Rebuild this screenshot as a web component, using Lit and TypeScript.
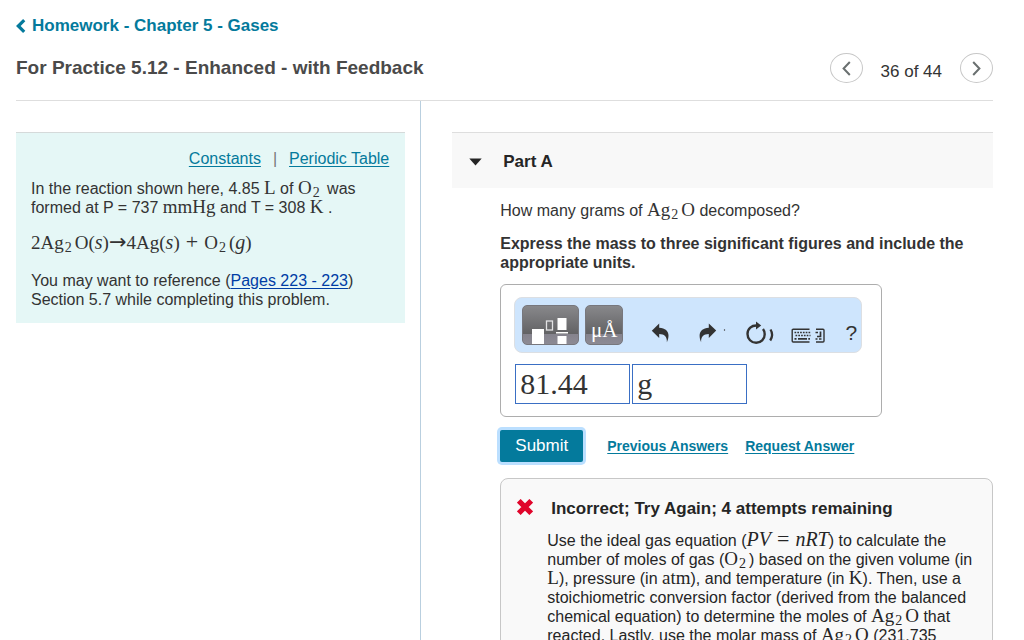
import { LitElement, html, css } from "lit";
import { customElement, state } from "lit/decorators.js";

const o2 = html`<span class="math">O<sub>2</sub></span>`;
const ag2o = html`<span class="math">Ag<sub>2</sub>O</span>`;

@customElement("answer-editor")
export class AnswerEditor extends LitElement {
  @state() private amount = "81.44";
  @state() private unit = "g";

  static styles = css`
    :host {
      display: block;
      width: fit-content;
      max-width: 100%;
      box-sizing: border-box;
      border: 1px solid #adadad;
      border-radius: 6px;
      padding: 12px 19px 12px 13px;
      background: #fff;
    }
    .toolbar {
      display: flex;
      align-items: flex-start;
      gap: 6px;
      padding: 7px 4px 7px 7px;
      border: 1px solid #dcdfe3;
      border-radius: 8px;
      background: #cee5fd;
    }
    button {
      display: block;
      margin: 0;
      padding: 0;
      border: 0;
      background: none;
      color: #333;
      cursor: pointer;
    }
    svg {
      display: block;
    }
    .palette {
      box-sizing: border-box;
      height: 40px;
      border: 1px solid #77777d;
      border-radius: 5px;
      background: linear-gradient(#88888b 0, #626264 28px, #85838d 28px, #8c8a94 100%);
      color: #fff;
      overflow: hidden;
    }
    .templates {
      width: 57px;
    }
    .units {
      width: 38px;
      padding-top: 10px;
      font: 21px/28px "Liberation Serif", serif;
    }
    .tools {
      display: flex;
      gap: 15px;
      padding: 16px 0 0 22px;
    }
    .help {
      width: 12px;
      font: 21px/24px "Liberation Sans", sans-serif;
    }
    .fields {
      display: flex;
      gap: 2px;
      padding: 11px 0 0 1px;
    }
    input {
      box-sizing: border-box;
      width: 115px;
      height: 40px;
      padding: 0 4px;
      border: 1px solid #3a6fc4;
      border-radius: 0;
      background: #fff;
      color: #333;
      font: 30px/38px "Liberation Serif", serif;
      outline: 0;
    }
  `;

  render() {
    return html`
      <div class="toolbar" role="toolbar" aria-label="Math tools">
        <button class="palette templates" aria-label="Templates">
          <svg width="55" height="38" viewBox="0 0 55 38">
            <rect x="9" y="23" width="12" height="15" fill="#fff" />
            <rect x="23.500" y="15" width="6" height="9" fill="none" stroke="#e3e3e5" stroke-width="1.300" />
            <rect x="34.500" y="12" width="9" height="12" fill="#fff" />
            <rect x="33" y="26" width="12" height="1.500" fill="#fff" />
            <rect x="34.500" y="30" width="9" height="8" fill="#fff" />
          </svg>
        </button>
        <button class="palette units" aria-label="Units">μÅ</button>
        <div class="tools">
          <button aria-label="Undo">
            <svg width="33" height="24" viewBox="0 0 33 24" fill="currentColor">
              <path d="M.8 9.700 8.200 2.500v4.300c6 .2 9.300 3.500 9.300 7.800 0 2.300-.6 4.500-1.600 6.600.2-5.800-2.600-8-7.700-8.100v3.900z" />
            </svg>
          </button>
          <button aria-label="Redo">
            <svg width="32" height="24" viewBox="0 0 32 24" fill="currentColor">
              <path d="M17.200 9.500 9.800 2.500v4.300C4 7 .6 10.300.6 14.500c0 2.300.5 4.600 1.500 6.700-.2-5.800 2.600-8 7.700-8.100V17z" />
              <circle cx="25.500" cy="9" r=".7" />
            </svg>
          </button>
          <button aria-label="Reset">
            <svg width="30" height="24" viewBox="0 0 30 24">
              <path d="M11.500 4.600C5.500 4 1.500 8 1.500 12.900c0 5 3.800 8.900 8.700 8.900 4.700 0 8.500-3.700 8.500-8.500 0-2-.6-3.800-1.700-5.200" fill="none" stroke="currentColor" stroke-width="2.400" />
              <path d="M10 .5 15.200 4.600 10 8.600z" fill="currentColor" />
              <path d="M24.500 8.500c2 3.200 2 7.500-.3 11" fill="none" stroke="currentColor" stroke-width="2.300" />
            </svg>
          </button>
          <button aria-label="Keyboard shortcuts">
            <svg width="39" height="24" viewBox="0 0 39 24" fill="none" stroke="currentColor">
              <path d="M18.500 8.300H2.200Q1.200 8.300 1.200 9.300V20Q1.200 21 2.200 21H18.500" stroke-width="1.400" />
              <path d="M3.500 11.500H19.500M4.500 14.500H19.500" stroke-width="1.700" stroke-dasharray="1.700 1.100" />
              <path d="M3.500 17.900h2M7 17.900h9M17.300 17.900h1.700" stroke-width="1.600" />
              <path d="M25 8.300h7Q33 8.300 33 9.300V20Q33 21 32 21H25" stroke-width="1.400" />
              <path d="M29.500 10.500v5h-3.500M24.500 11.500h2.500M24.500 18h2M28 18h2.500" stroke-width="1.700" />
            </svg>
          </button>
          <button class="help" aria-label="Help">?</button>
        </div>
      </div>
      <div class="fields">
        <input
          aria-label="Value"
          .value=${this.amount}
          @input=${(e: InputEvent) => (this.amount = (e.target as HTMLInputElement).value)}
        />
        <input
          aria-label="Units"
          .value=${this.unit}
          @input=${(e: InputEvent) => (this.unit = (e.target as HTMLInputElement).value)}
        />
      </div>
    `;
  }
}

@customElement("app-root")
export class AppRoot extends LitElement {
  @state() private open = true;

  static styles = css`
    :host {
      display: flex;
      flex-direction: column;
      box-sizing: border-box;
      height: 100vh;
      overflow-y: auto;
      scrollbar-width: none;
      padding: 0 31px 0 16px;
      background: #fff;
      color: #333;
      font: 16px/19px "Liberation Sans", Arial, sans-serif;
    }
    h1,
    h2,
    h3,
    p {
      margin: 0;
    }
    a {
      color: #047a9c;
      text-underline-offset: 2px;
    }
    svg {
      display: block;
    }
    .top {
      padding: 16px 0 17px;
      border-bottom: 1px solid #dedede;
    }
    .back {
      display: flex;
      align-items: center;
      width: fit-content;
      gap: 6px;
      font: bold 17px/20px "Liberation Sans", Arial, sans-serif;
      text-decoration: none;
    }
    .title-row {
      display: flex;
      align-items: center;
      justify-content: space-between;
      margin-top: 17px;
    }
    h1 {
      font-size: 19px;
      line-height: 24px;
      color: #4a4a4a;
    }
    .pager {
      display: flex;
      align-items: center;
      gap: 18px;
      font-size: 17px;
    }
    .pager span {
      padding-top: 6px;
    }
    .pager button {
      display: grid;
      place-items: center;
      width: 33px;
      height: 30px;
      padding: 0;
      border: 1px solid #c7c7c7;
      border-radius: 50%;
      background: #fff;
      color: #6a7070;
    }
    .columns {
      flex: 1 0 auto;
      display: grid;
      grid-template-columns: 12fr 17fr;
    }
    .side {
      padding: 31px 15px 0 0;
    }
    .main {
      padding: 31px 0 24px 31px;
      border-left: 1px solid #b9cfdf;
    }
    .intro {
      padding: 16px 16px 14px 15px;
      border-top: 1px solid #d5dada;
      background: #e5f7f6;
    }
    .refs {
      display: flex;
      justify-content: flex-end;
      gap: 12px;
      margin-bottom: 11px;
      color: #777;
    }
    .pages {
      color: #003da5;
    }
    .math {
      font-family: "Liberation Serif", "Times New Roman", serif;
      font-size: 19px;
      line-height: 0;
      white-space: nowrap;
    }
    .math i {
      font-size: 20px;
    }
    .math sub {
      margin: 0 3px 0 1px;
      font-size: 14px;
      line-height: 0;
      vertical-align: -3px;
    }
    .math b {
      margin: 0 6px;
      font-size: 22px;
      font-weight: normal;
    }
    .math .arrow {
      margin: 0;
      font-family: "DejaVu Sans", sans-serif;
      font-size: 21px;
    }
    .equation {
      margin: 16px 0;
      line-height: 22px;
    }
    .part {
      display: flex;
      align-items: center;
      gap: 21px;
      width: 100%;
      height: 56px;
      padding: 2px 17px 0;
      border: 0;
      border-top: 1px solid #dedede;
      background: #f8f8f8;
      color: #252525;
      font: bold 17px/20px "Liberation Sans", Arial, sans-serif;
      text-align: left;
    }
    .work {
      padding: 13px 0 0 48px;
    }
    .prompt {
      margin: 14px 0 12px;
      font-weight: bold;
    }
    .actions {
      display: flex;
      align-items: center;
      gap: 17px;
      margin: 13px 0 16px;
      font-size: 14px;
      font-weight: bold;
    }
    .submit {
      width: 83px;
      height: 32px;
      margin-right: 7px;
      padding: 0;
      border: 0;
      border-radius: 2px;
      background: #047a9c;
      box-shadow: 0 0 0 3px #bbdfff;
      color: #fff;
      font: 17px/20px "Liberation Sans", Arial, sans-serif;
    }
    .feedback {
      display: grid;
      grid-template-columns: auto 1fr;
      column-gap: 14px;
      padding: 20px 15px 24px 16px;
      border: 1px solid #c7c7c7;
      border-radius: 8px;
      background: #f9f9f9;
      color: #252525;
    }
    .feedback h3 {
      padding-left: 4px;
      font-size: 17px;
      line-height: 20px;
    }
    .feedback p {
      grid-column: 2;
      margin-top: 12px;
    }
  `;

  render() {
    return html`
      <header class="top">
        <a class="back" href="#">
          <svg width="10" height="14" viewBox="0 0 10 14" fill="none" stroke="currentColor" stroke-width="3.200">
            <path d="M8.200 1.200 2.300 7l5.900 5.800" />
          </svg>
          Homework - Chapter 5 - Gases
        </a>
        <div class="title-row">
          <h1>For Practice 5.12 - Enhanced - with Feedback</h1>
          <nav class="pager" aria-label="Items">
            <button aria-label="Previous item">
              <svg width="9" height="15" viewBox="0 0 9 15" fill="none" stroke="currentColor" stroke-width="2">
                <path d="M7.800 1 1.600 7.500 7.800 14" />
              </svg>
            </button>
            <span>36 of 44</span>
            <button aria-label="Next item">
              <svg width="9" height="15" viewBox="0 0 9 15" fill="none" stroke="currentColor" stroke-width="2">
                <path d="M1.200 1 7.400 7.500 1.200 14" />
              </svg>
            </button>
          </nav>
        </div>
      </header>
      <div class="columns">
        <aside class="side">
          <section class="intro">
            <div class="refs">
              <a href="#">Constants</a><span>|</span><a href="#">Periodic Table</a>
            </div>
            <p>
              In the reaction shown here, 4.85 <span class="math">L</span> of ${o2} was formed at P = 737
              <span class="math">mmHg</span> and T = 308 <span class="math">K</span> .
            </p>
            <p class="equation">
              <span class="math">2Ag<sub>2</sub>O(<i>s</i>)<b class="arrow">→</b>4Ag(<i>s</i>)<b>+</b>O<sub>2</sub>(<i>g</i>)</span>
            </p>
            <p>
              You may want to reference (<a class="pages" href="#">Pages 223 - 223</a>) Section 5.7 while completing
              this problem.
            </p>
          </section>
        </aside>
        <main class="main">
          <h2>
            <button class="part" aria-expanded=${this.open} @click=${() => (this.open = !this.open)}>
              <svg width="13" height="8" viewBox="0 0 13 8" fill="currentColor"><path d="M.3.500h12.400L6.500 7.500z" /></svg>
              Part A
            </button>
          </h2>
          <div class="work" ?hidden=${!this.open}>
            <p>How many grams of ${ag2o} decomposed?</p>
            <p class="prompt">Express the mass to three significant figures and include the appropriate units.</p>
            <answer-editor></answer-editor>
            <div class="actions">
              <button class="submit">Submit</button>
              <a href="#">Previous Answers</a>
              <a href="#">Request Answer</a>
            </div>
            <section class="feedback">
              <svg width="16" height="16" viewBox="0 0 16 16" stroke="#e0052b" stroke-width="5.200">
                <path d="M1.800 1.800 14.200 14.200M14.200 1.800 1.800 14.200" />
              </svg>
              <h3>Incorrect; Try Again; 4 attempts remaining</h3>
              <p>
                Use the ideal gas equation (<span class="math"><i>PV</i><b>=</b><i>nRT</i></span>) to calculate the
                number of moles of gas (${o2}) based on the given volume (in <span class="math">L</span>), pressure (in
                <span class="math">atm</span>), and temperature (in <span class="math">K</span>). Then, use a
                stoichiometric conversion factor (derived from the balanced chemical equation) to determine the moles
                of ${ag2o} that reacted. Lastly, use the molar mass of ${ag2o} (231.735
              </p>
            </section>
          </div>
        </main>
      </div>
    `;
  }
}
